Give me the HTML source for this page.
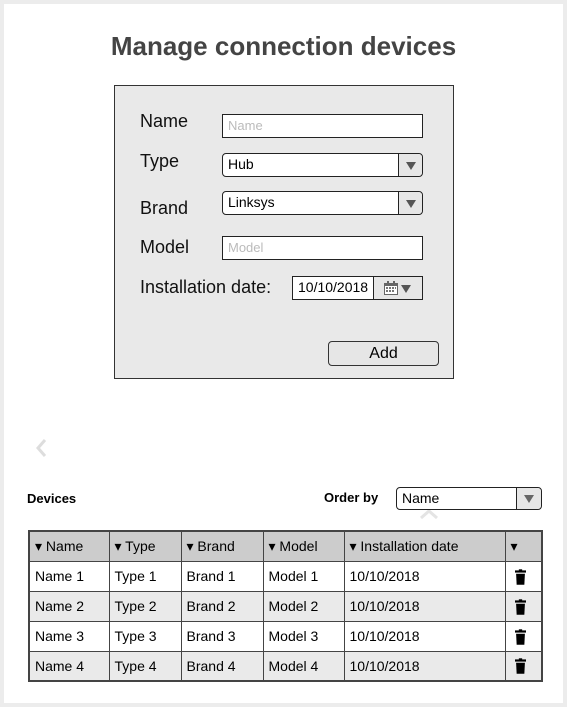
<!DOCTYPE html>
<html><head><style>
*{box-sizing:border-box;margin:0;padding:0}
body{width:567px;height:707px;background:#ececec;font-family:"Liberation Sans",sans-serif;position:relative;overflow:hidden;color:#000}
.card{position:absolute;left:4px;top:4px;width:559px;height:699px;background:#fff}
.a{position:absolute}
h1{position:absolute;left:0;width:567px;top:31px;text-align:center;font-size:26px;font-weight:bold;color:#444}
.lbl{position:absolute;font-size:18px;color:#111}
.in{position:absolute;background:#fff;border:1px solid #222;font-size:14px;padding-left:5px;line-height:21px}
.ph{color:#bbb;font-size:13px}
.sel{border-radius:4px}
.sel .btn{position:absolute;right:0;top:0;bottom:0;width:24px;border-left:1px solid #222;background:#e6e6e6;border-radius:0 4px 4px 0}
.tri{position:absolute;width:0;height:0;border-left:5px solid transparent;border-right:5px solid transparent;border-top:8px solid #555}
table{position:absolute;left:28px;top:530px;border-collapse:collapse;font-size:14px;border:2px solid #444}
td{border:1px solid #444;height:30px;padding-left:5px}
tr.h td{background:#ccc}
tr.g td{background:#eaeaea}
.bin{display:inline-block;position:relative;width:11px;height:16px;margin-left:4px;vertical-align:middle}
</style></head><body>
<div class="card"></div>
<h1>Manage connection devices</h1>
<div class="a" style="left:114px;top:85px;width:340px;height:294px;background:#e9e9e9;border:1px solid #333"></div>
<div class="lbl" style="left:140px;top:111px">Name</div>
<div class="lbl" style="left:140px;top:151px">Type</div>
<div class="lbl" style="left:140px;top:198px">Brand</div>
<div class="lbl" style="left:140px;top:237px">Model</div>
<div class="lbl" style="left:140px;top:277px">Installation date:</div>
<div class="in ph" style="left:222px;top:114px;width:201px;height:24px">Name</div>
<div class="in sel" style="left:222px;top:153px;width:201px;height:24px">Hub<div class="btn"><div class="tri" style="left:7px;top:8px"></div></div></div>
<div class="in sel" style="left:222px;top:191px;width:201px;height:24px">Linksys<div class="btn"><div class="tri" style="left:7px;top:8px"></div></div></div>
<div class="in ph" style="left:222px;top:236px;width:201px;height:24px">Model</div>
<div class="in" style="left:292px;top:276px;width:131px;height:24px;font-size:14px">10/10/2018
<div class="a" style="left:80px;top:0;width:49px;height:22px;border-left:1px solid #222;background:#e6e6e6">
<svg class="a" style="left:10px;top:4px" width="14" height="14"><rect x="0.5" y="2.5" width="13" height="11" fill="#fff" stroke="#666"/><rect x="0" y="2" width="14" height="3" fill="#666"/><rect x="3" y="0" width="2" height="3" fill="#666"/><rect x="9" y="0" width="2" height="3" fill="#666"/><g fill="#777"><rect x="2" y="6" width="2" height="2"/><rect x="5" y="6" width="2" height="2"/><rect x="8" y="6" width="2" height="2"/><rect x="11" y="6" width="1" height="2"/><rect x="2" y="9" width="2" height="2"/><rect x="5" y="9" width="2" height="2"/><rect x="8" y="9" width="2" height="2"/></g></svg>
<div class="tri" style="left:27px;top:8px"></div></div></div>
<div class="a" style="left:328px;top:341px;width:111px;height:25px;border:1px solid #333;border-radius:4px;background:#e6e6e6;text-align:center;font-size:16px;line-height:23px">Add</div>
<svg class="a" style="left:34px;top:438px" width="14" height="20"><path d="M11 2 L4 10 L11 18" fill="none" stroke="#ddd" stroke-width="3"/></svg>
<svg class="a" style="left:419px;top:508px" width="20" height="12"><path d="M2 10 L10 3 L18 10" fill="none" stroke="#e4e4e4" stroke-width="3"/></svg>
<div class="a" style="left:27px;top:491px;font-size:13px;font-weight:bold">Devices</div>
<div class="a" style="left:324px;top:490px;font-size:13px;font-weight:bold">Order by</div>
<div class="in sel" style="left:396px;top:487px;width:146px;height:23px">Name<div class="btn" style="width:25px"><div class="tri" style="left:7px;top:7px;border-top-color:#666"></div></div></div>
<table>
<colgroup><col style="width:80px"><col style="width:72px"><col style="width:82px"><col style="width:81px"><col style="width:161px"><col style="width:37px"></colgroup>
<tr class="h"><td>▾ Name</td><td>▾ Type</td><td>▾ Brand</td><td>▾ Model</td><td>▾ Installation date</td><td>▾</td></tr>
<tr><td>Name 1</td><td>Type 1</td><td>Brand 1</td><td>Model 1</td><td>10/10/2018</td><td><svg class="bin" viewBox="0 0 10 14"><rect x="0" y="1" width="10" height="2" fill="#000"/><rect x="3.5" y="0" width="3" height="2" fill="#000"/><path d="M1 4 H9 L8.5 14 H1.5Z" fill="#000"/></svg></td></tr>
<tr class="g"><td>Name 2</td><td>Type 2</td><td>Brand 2</td><td>Model 2</td><td>10/10/2018</td><td><svg class="bin" viewBox="0 0 10 14"><rect x="0" y="1" width="10" height="2" fill="#000"/><rect x="3.5" y="0" width="3" height="2" fill="#000"/><path d="M1 4 H9 L8.5 14 H1.5Z" fill="#000"/></svg></td></tr>
<tr><td>Name 3</td><td>Type 3</td><td>Brand 3</td><td>Model 3</td><td>10/10/2018</td><td><svg class="bin" viewBox="0 0 10 14"><rect x="0" y="1" width="10" height="2" fill="#000"/><rect x="3.5" y="0" width="3" height="2" fill="#000"/><path d="M1 4 H9 L8.5 14 H1.5Z" fill="#000"/></svg></td></tr>
<tr class="g"><td>Name 4</td><td>Type 4</td><td>Brand 4</td><td>Model 4</td><td>10/10/2018</td><td><svg class="bin" viewBox="0 0 10 14"><rect x="0" y="1" width="10" height="2" fill="#000"/><rect x="3.5" y="0" width="3" height="2" fill="#000"/><path d="M1 4 H9 L8.5 14 H1.5Z" fill="#000"/></svg></td></tr>
</table>
</body></html>
